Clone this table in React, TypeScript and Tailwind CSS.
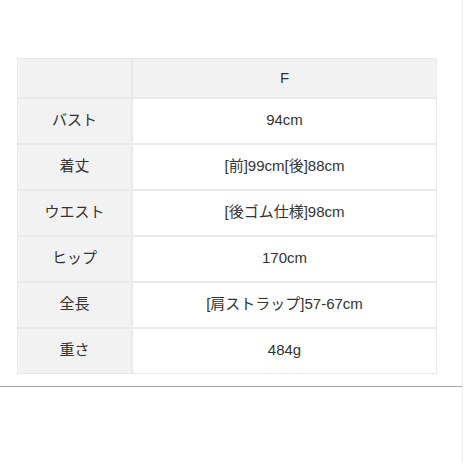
import { Fragment } from "react";

const ROWS: { label: string; value: string }[] = [
  { label: "バスト", value: "94cm" },
  { label: "着丈", value: "[前]99cm[後]88cm" },
  { label: "ウエスト", value: "[後ゴム仕様]98cm" },
  { label: "ヒップ", value: "170cm" },
  { label: "全長", value: "[肩ストラップ]57-67cm" },
  { label: "重さ", value: "484g" },
];

export default function App() {
  return (
    <div
      className="relative h-[463px] w-[463px] overflow-hidden bg-white text-[15px] text-[#333]"
      style={{ fontFamily: '"Liberation Sans", "Noto Sans CJK JP", sans-serif' }}
    >
      <div className="absolute right-0 top-0 h-full w-px bg-[#ececec]" />

      <div className="pl-[17px] pt-[58px]">
        <div className="grid w-[420px] grid-cols-[113px_1fr] gap-[2px] bg-[#e9e9e9] p-[1px]">
          <div className="h-[38px] bg-[#f2f2f2]" />
          <div className="flex h-[38px] items-center justify-center bg-[#f2f2f2]">F</div>
          {ROWS.map((r) => (
            <Fragment key={r.label}>
              <div className="flex h-[44px] items-center justify-center bg-[#f2f2f2] pb-[2px]">
                {r.label}
              </div>
              <div className="flex h-[44px] items-center justify-center bg-white pb-[2px]">
                {r.value}
              </div>
            </Fragment>
          ))}
        </div>
      </div>

      <div className="mt-[12px] h-px w-full bg-[#a8a8a8]" />
    </div>
  );
}
